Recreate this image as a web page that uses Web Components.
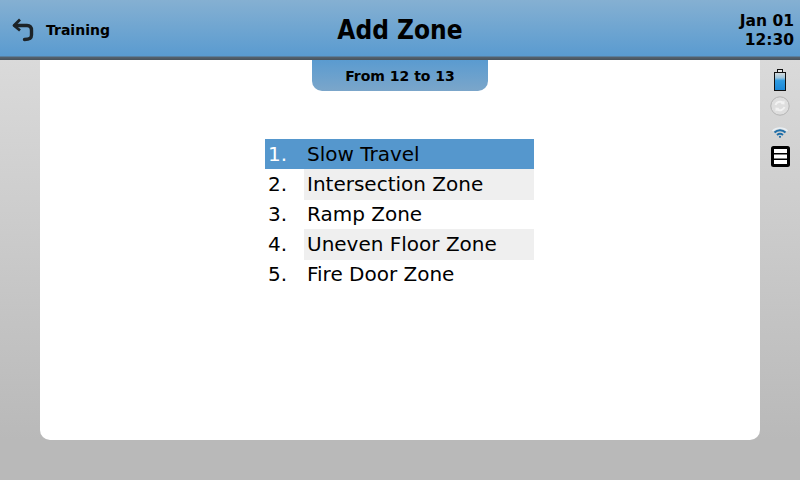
<!DOCTYPE html>
<html>
<head>
<meta charset="utf-8">
<style>
html, body { margin: 0; padding: 0; }
body { font-family: "DejaVu Sans", sans-serif; }
</style>
</head>
<body>
<zone-app>
  <top-bar back="Training" heading="Add Zone" date="Jan 01" time="12:30"></top-bar>
  <zone-card>
    <span slot="tab">From 12 to 13</span>
    <zone-row num="1" selected>Slow Travel</zone-row>
    <zone-row num="2" shaded>Intersection Zone</zone-row>
    <zone-row num="3">Ramp Zone</zone-row>
    <zone-row num="4" shaded>Uneven Floor Zone</zone-row>
    <zone-row num="5">Fire Door Zone</zone-row>
  </zone-card>
  <status-rail></status-rail>
</zone-app>
<script>
class ZoneApp extends HTMLElement {
    constructor() {
        super();
        this.attachShadow({ mode: "open" });
        this.shadowRoot.innerHTML = `
            <style>
                :host {
                    display: grid;
                    grid-template-columns: 40px 720px 40px;
                    grid-template-rows: 60px 380px 40px;
                    width: 800px;
                    height: 480px;
                    overflow: hidden;
                    background: linear-gradient(#dadada 60px, #b9b9b9 440px);
                }
                ::slotted(top-bar) { grid-column: 1 / 4; grid-row: 1; }
                ::slotted(zone-card) { grid-column: 2; grid-row: 2; }
                ::slotted(status-rail) { grid-column: 3; grid-row: 2; }
            </style>
            <slot></slot>
        `;
    }
}

class TopBar extends HTMLElement {
    constructor() {
        super();
        this.attachShadow({ mode: "open" });
    }
    connectedCallback() {
        this.shadowRoot.innerHTML = `
            <style>
                :host {
                    display: grid;
                    grid-template-columns: 1fr auto 1fr;
                    align-items: center;
                    box-sizing: border-box;
                    height: 60px;
                    padding: 0 6px 0 6px;
                    color: #000;
                    background: linear-gradient(#85b0d2, #5a9bd0 56px, #56636e 57px, #47525c 60px);
                }
                .back { display: flex; align-items: center; gap: 11px; padding-left: 6px; font-size: 14px; font-weight: bold; }
                svg { display: block; }
                h1 {
                    margin: 0;
                    font-family: "DejaVu Sans Condensed", "DejaVu Sans", sans-serif;
                    font-stretch: condensed;
                    font-size: 26px;
                    font-weight: bold;
                }
                .clock { justify-self: end; text-align: right; font-size: 15.5px; font-weight: bold; line-height: 19px; padding-top: 2px; }
            </style>
            <div class="back">
                <svg width="23" height="24" viewBox="0 0 23 24" fill="none">
                    <path d="M3 7.5 L15 7.5 C18.5 7.5 19.5 9.5 19.5 12.5 L19.5 17 C19.5 20.5 17.5 21.5 12.5 21.5" stroke="#1d2327" stroke-width="3.4" stroke-linecap="round"/>
                    <path d="M8 1.5 L2 7.5 L8 12.5" stroke="#1d2327" stroke-width="2.8" stroke-linejoin="round"/>
                </svg>
                <span>${this.getAttribute("back")}</span>
            </div>
            <h1>${this.getAttribute("heading")}</h1>
            <div class="clock">${this.getAttribute("date")}<br>${this.getAttribute("time")}</div>
        `;
    }
}

class ZoneCard extends HTMLElement {
    constructor() {
        super();
        this.attachShadow({ mode: "open" });
        this.shadowRoot.innerHTML = `
            <style>
                :host {
                    display: flex;
                    flex-direction: column;
                    align-items: center;
                    background: #fff;
                    border-radius: 0 0 10px 10px;
                }
                .tab {
                    box-sizing: border-box;
                    width: 176px;
                    height: 31px;
                    padding-top: 8px;
                    text-align: center;
                    font-size: 14px;
                    line-height: 16px;
                    font-weight: bold;
                    color: #000;
                    background: linear-gradient(#5a9bd0, #7ba6ca);
                    border-radius: 0 0 10px 10px;
                }
                .list { width: 269px; margin: 48px 1px 0 0; }
            </style>
            <div class="tab"><slot name="tab"></slot></div>
            <div class="list"><slot></slot></div>
        `;
    }
}

class ZoneRow extends HTMLElement {
    constructor() {
        super();
        this.attachShadow({ mode: "open" });
    }
    connectedCallback() {
        this.shadowRoot.innerHTML = `
            <style>
                :host {
                    display: grid;
                    grid-template-columns: 39px 1fr;
                    height: 30px;
                    font-size: 20px;
                    line-height: 31px;
                    color: #000;
                }
                :host([selected]) { background: #5597cd; }
                :host([selected]) .num { color: #fff; }
                :host([shaded]) .label { background: #efefef; }
                .num { padding-left: 3px; }
                .label { padding-left: 3px; white-space: nowrap; }
            </style>
            <div class="num">${this.getAttribute("num")}.</div>
            <div class="label"><slot></slot></div>
        `;
    }
}

class StatusRail extends HTMLElement {
    constructor() {
        super();
        this.attachShadow({ mode: "open" });
        this.shadowRoot.innerHTML = `
            <style>
                :host {
                    display: flex;
                    flex-direction: column;
                    align-items: center;
                    padding-top: 9px;
                }
                svg { display: block; }
                .sync { margin-top: 5px; }
                .wifi { margin-top: 10px; }
                .menu { margin-top: 8px; }
            </style>
            <svg width="14" height="22" viewBox="0 0 14 22">
                <defs>
                    <linearGradient id="charge" x1="0" y1="0" x2="0" y2="1">
                        <stop offset="0" stop-color="#d8dcdc"/>
                        <stop offset="0.3" stop-color="#9cc4dc"/>
                        <stop offset="0.45" stop-color="#2f9be0"/>
                        <stop offset="1" stop-color="#1a86d6"/>
                    </linearGradient>
                </defs>
                <rect x="4.5" y="0.5" width="5" height="3" fill="#e6e6e6" stroke="#111"/>
                <rect x="1.5" y="3.5" width="11" height="18" fill="url(#charge)" stroke="#111"/>
            </svg>
            <svg class="sync" width="20" height="20" viewBox="0 0 20 20" fill="none">
                <circle cx="10" cy="10" r="9.2" fill="#dedede" stroke="#b4b4b4"/>
                <path d="M5.5 9 C6.5 6 10 5 13 6.5 M14.5 11 C13.5 14 10 15 7 13.5" stroke="#f2f2f2" stroke-width="2"/>
                <path d="M14.5 4.5 L14.5 8.5 L10.5 8" fill="#f2f2f2"/>
                <path d="M5.5 15.5 L5.5 11.5 L9.5 12" fill="#f2f2f2"/>
            </svg>
            <svg class="wifi" width="18" height="12" viewBox="0 0 18 12" fill="none" stroke="#1f6ea8" stroke-width="2">
                <path d="M1.5 5 C5.5 1 12.5 1 16.5 5" stroke="#e8eef2" stroke-width="1.6"/>
                <path d="M3.5 6.5 C6.5 3.5 11.5 3.5 14.5 6.5"/>
                <path d="M6 9 C7.8 7.6 10.2 7.6 12 9"/>
                <circle cx="9" cy="10.8" r="1.1" fill="#1f6ea8" stroke="none"/>
            </svg>
            <svg class="menu" width="19" height="21" viewBox="0 0 19 21">
                <rect x="0" y="0" width="19" height="21" rx="2.5" fill="#000"/>
                <rect x="3" y="3" width="13" height="4" fill="#fff"/>
                <rect x="3" y="8.5" width="13" height="4" fill="#fff"/>
                <rect x="3" y="14" width="13" height="4" fill="#fff"/>
            </svg>
        `;
    }
}

customElements.define("zone-app", ZoneApp);
customElements.define("top-bar", TopBar);
customElements.define("zone-card", ZoneCard);
customElements.define("zone-row", ZoneRow);
customElements.define("status-rail", StatusRail);
</script>
</body>
</html>
